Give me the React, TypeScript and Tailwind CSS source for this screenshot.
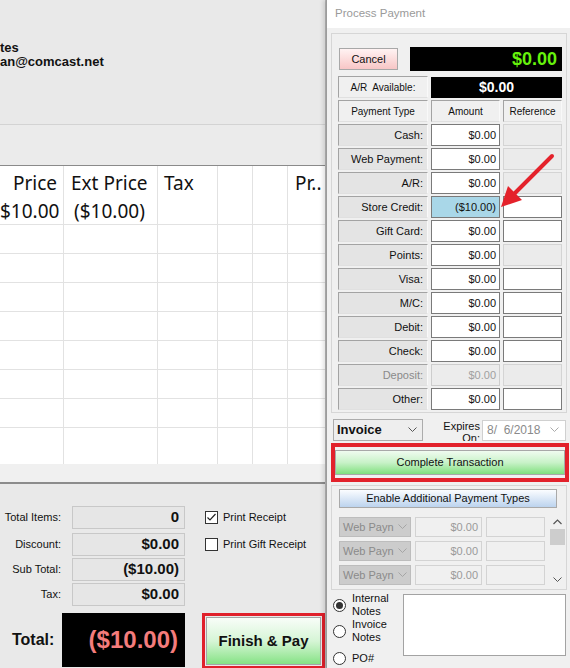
import React from 'react';

const SANS = "font-['Liberation_Sans',Arial,sans-serif]";

const Chevron = ({ color = '#555' }: { color?: string }) => (
  <svg width="9" height="6" viewBox="0 0 9 6" className="shrink-0">
    <path d="M0.5 0.5 L4.5 4.5 L8.5 0.5" fill="none" stroke={color} strokeWidth="1" />
  </svg>
);

const emptyRows = [29, 29, 29, 29, 29, 29, 29, 36];

const ItemsTable = () => (
  <div className="bg-white border-t border-[#8a8a8a] font-['Noto_Sans',sans-serif] text-[19px] text-[#111]">
    <div className="flex h-[59px] border-b border-[#e2e2e2]">
      <div className="w-[64px] border-r border-[#e2e2e2] text-right pr-[6px] pt-[3px] leading-[28px]">
        <div>Price</div>
        <div>$10.00</div>
      </div>
      <div className="w-[94px] border-r border-[#e2e2e2] pl-[7px] pt-[3px] leading-[28px]">
        <div>Ext Price</div>
        <div className="pl-[3px]">($10.00)</div>
      </div>
      <div className="w-[60px] border-r border-[#e2e2e2] pl-[6px] pt-[3px] leading-[28px]">Tax</div>
      <div className="w-[35px] border-r border-[#e2e2e2]" />
      <div className="w-[35px] border-r border-[#e2e2e2]" />
      <div className="w-[37px] pl-[7px] pt-[3px] leading-[28px] whitespace-nowrap">Pr..</div>
    </div>
    {emptyRows.map((h, i) => (
      <div
        key={i}
        style={{ height: h }}
        className={i < emptyRows.length - 1 ? 'flex border-b border-[#e2e2e2]' : 'flex'}
      >
        <div className="w-[64px] border-r border-[#e2e2e2]" />
        <div className="w-[94px] border-r border-[#e2e2e2]" />
        <div className="w-[60px] border-r border-[#e2e2e2]" />
        <div className="w-[35px] border-r border-[#e2e2e2]" />
        <div className="w-[35px] border-r border-[#e2e2e2]" />
        <div className="w-[37px]" />
      </div>
    ))}
  </div>
);

const CheckBox = ({ checked, label }: { checked: boolean; label: string }) => (
  <div className="flex items-center gap-[5px] ml-[20px]">
    <div className="w-[13px] h-[13px] border border-[#333] bg-white flex items-center justify-center">
      {checked && (
        <svg width="11" height="11" viewBox="0 0 11 11">
          <path d="M1.5 5.5 L4 8 L9.5 2" fill="none" stroke="#222" strokeWidth="1.2" />
        </svg>
      )}
    </div>
    <span className="text-[11px] text-[#111] whitespace-nowrap">{label}</span>
  </div>
);

const totals = [
  { label: 'Total Items:', value: '0', mt: 'mt-0', check: { checked: true, label: 'Print Receipt' } },
  { label: 'Discount:', value: '$0.00', mt: 'mt-[4px]', check: { checked: false, label: 'Print Gift Receipt' } },
  { label: 'Sub Total:', value: '($10.00)', mt: 'mt-[2px]' },
  { label: 'Tax:', value: '$0.00', mt: 'mt-[2px]' },
];

const LeftPanel = () => (
  <div className={`w-[326px] shrink-0 h-full flex flex-col bg-[#e9e9e9] border-r border-[#b9b9b9] ${SANS}`}>
    <div className="h-[125px] shrink-0 border-b border-[#d3d3d3] pt-[41px] font-bold text-[13px] leading-[14px] text-[#111]">
      <div>tes</div>
      <div>an@comcast.net</div>
    </div>
    <div className="h-[40px] shrink-0 bg-[#ebebeb]" />
    <ItemsTable />
    <div className="h-[18px] shrink-0 bg-[#f0f0f0]" />
    <div className="h-[2px] shrink-0 bg-[#8c8c8c]" />
    <div className="flex-1 flex flex-col pt-[22px]">
      {totals.map((t) => (
        <div key={t.label} className={`flex items-center h-[23px] ${t.mt}`}>
          <div className="w-[61px] text-right text-[11px] text-[#111] whitespace-nowrap">{t.label}</div>
          <div className="ml-[11px] w-[113px] h-[23px] bg-[#e6e6e6] border border-[#c8c8c8] flex items-center justify-end pr-[5px] font-bold text-[15px] text-[#111]">
            {t.value}
          </div>
          {t.check && <CheckBox checked={t.check.checked} label={t.check.label} />}
        </div>
      ))}
      <div className="flex items-start mt-[7px]">
        <div className="w-[62px] h-[54px] flex items-center pl-[12px] font-bold text-[16px] text-[#111]">Total:</div>
        <div className="w-[123px] h-[54px] bg-black flex items-center justify-end pr-[7px] font-bold text-[24px] text-[#f47c7c]">
          ($10.00)
        </div>
        <div className="ml-[17px] w-[123px] h-[56px] border-[3px] border-[#e0202b] p-px">
          <div className="h-full border border-[#a5a5a5] bg-linear-to-b from-[#f8fdf8] via-[#d6f5d6] to-[#84e284] flex items-center justify-center font-bold text-[15px] text-[#111]">
            Finish &amp; Pay
          </div>
        </div>
      </div>
    </div>
  </div>
);

type RefState = 'on' | 'off';
const payRows: { label: string; amount: string; ref: RefState; hl?: boolean; disabled?: boolean }[] = [
  { label: 'Cash:', amount: '$0.00', ref: 'off' },
  { label: 'Web Payment:', amount: '$0.00', ref: 'off' },
  { label: 'A/R:', amount: '$0.00', ref: 'off' },
  { label: 'Store Credit:', amount: '($10.00)', ref: 'on', hl: true },
  { label: 'Gift Card:', amount: '$0.00', ref: 'on' },
  { label: 'Points:', amount: '$0.00', ref: 'off' },
  { label: 'Visa:', amount: '$0.00', ref: 'on' },
  { label: 'M/C:', amount: '$0.00', ref: 'on' },
  { label: 'Debit:', amount: '$0.00', ref: 'on' },
  { label: 'Check:', amount: '$0.00', ref: 'on' },
  { label: 'Deposit:', amount: '$0.00', ref: 'off', disabled: true },
  { label: 'Other:', amount: '$0.00', ref: 'on' },
];

const labelBox =
  'h-[22px] border border-t-[#a3a3a3] border-l-[#a3a3a3] border-r-[#f9f9f9] border-b-[#e0e0e0] flex items-center';

const Radio = ({ checked }: { checked?: boolean }) => (
  <div className="w-[13px] h-[13px] shrink-0 rounded-full border border-[#333] bg-white flex items-center justify-center">
    {checked && <div className="w-[7px] h-[7px] rounded-full bg-[#333]" />}
  </div>
);

const PaymentDialog = () => (
  <div className={`relative flex-1 h-full flex flex-col bg-[#f0f0f0] border-l border-[#9c9c9c] shadow-[-3px_0_4px_rgba(0,0,0,0.12)] ${SANS} text-[11px] text-[#111]`}>
    <div className="h-[28px] shrink-0 bg-white flex items-center pl-[8px] text-[11.5px] text-[#9a9a9a]">Process Payment</div>

    <div className="ml-[4px] mr-[3px] mt-[5px] border border-[#d6d6d6] pl-[6px] pt-[13px] pb-[2px] flex flex-col">
      <div className="flex items-center h-[24px] w-[224px]">
        <div className="ml-px w-[59px] h-[22px] border border-[#a8a8a8] bg-linear-to-b from-[#fff3f3] to-[#f7c6c6] flex items-center justify-center">
          Cancel
        </div>
        <div className="ml-auto w-[152px] h-[24px] bg-black flex items-center justify-end pr-[5px] font-bold text-[18px] text-[#66f20c]">
          $0.00
        </div>
      </div>
      <div className="flex items-center mt-[5px] gap-[3px]">
        <div className={`${labelBox} w-[90px] bg-[#f0f0f0] justify-center text-[10px] whitespace-pre`}>A/R  Available:</div>
        <div className="w-[131px] h-[21px] bg-black flex items-center justify-center font-bold text-[14px] text-white">$0.00</div>
      </div>
      <div className="flex mt-[2px] gap-[3px] text-[10px]">
        <div className={`${labelBox} w-[90px] bg-[#f0f0f0] justify-center`}>Payment Type</div>
        <div className={`${labelBox} w-[69px] bg-[#f0f0f0] justify-center`}>Amount</div>
        <div className={`${labelBox} w-[59px] bg-[#f0f0f0] justify-center`}>Reference</div>
      </div>
      {payRows.map((r) => (
        <div key={r.label} className="flex mt-[2px] gap-[3px]">
          <div className={`${labelBox} w-[90px] bg-[#e4e4e4] justify-end pr-[4px] ${r.disabled ? 'text-[#8a8a8a]' : ''}`}>
            {r.label}
          </div>
          <div
            className={`w-[69px] h-[22px] border flex items-center justify-end pr-[3px] ${
              r.disabled
                ? 'bg-[#ececec] border-[#cdcdcd] text-[#a0a0a0]'
                : r.hl
                ? 'bg-[#a9d7e8] border-[#7a7a7a]'
                : 'bg-white border-[#7a7a7a]'
            }`}
          >
            {r.amount}
          </div>
          <div
            className={`w-[59px] h-[22px] border ${
              r.ref === 'on' ? 'bg-white border-[#7a7a7a]' : 'bg-[#ebebeb] border-[#d4d4d4]'
            }`}
          />
        </div>
      ))}
    </div>

    <div className="flex items-center mt-[6px] ml-[6px] h-[22px]">
      <div className="w-[90px] h-[22px] border border-[#acacac] bg-[#eeeeee] flex items-center justify-between pl-[3px] pr-[5px]">
        <span className="font-bold text-[13px]">Invoice</span>
        <Chevron />
      </div>
      <div className="w-[57px] h-[22px] overflow-hidden text-right leading-[12px] pt-px">
        <div>Expires</div>
        <div>On:</div>
      </div>
      <div className="ml-[2px] w-[84px] h-[21px] bg-white border border-[#d0d0d0] flex items-center justify-between pl-[4px] pr-[6px] text-[#8a8a8a] text-[12px]">
        <span className="whitespace-pre">8/  6/2018</span>
        <Chevron color="#aaa" />
      </div>
    </div>

    <div className="ml-[4px] mr-px mt-[2px] h-[39px] border-[4px] border-[#e2212b] py-[3px]">
      <div className="h-full border border-[#a8a8a8] bg-linear-to-b from-[#f0fbf0] via-[#c8f2c8] to-[#7ddf7d] flex items-center justify-center">
        Complete Transaction
      </div>
    </div>

    <div className="ml-[4px] mr-[3px] mt-[3px] border border-[#d6d6d6] pl-[7px] pt-[3px] pb-[2px]">
      <div className="w-[218px] h-[19px] border border-[#a9a9a9] bg-linear-to-b from-[#fbfdff] to-[#bcd3ee] flex items-center justify-center">
        Enable Additional Payment Types
      </div>
      <div className="flex mt-[6px]">
        <div className="flex flex-col gap-[4px] pt-[3px]">
          {[0, 1, 2].map((i) => (
            <div key={i} className="flex gap-[4px] h-[20px]">
              <div className="w-[72px] h-[20px] bg-[#cccccc] border border-[#bdbdbd] flex items-center justify-between pl-[3px] pr-[3px] text-[#8a8a8a] text-[11px] whitespace-nowrap overflow-hidden">
                <span>Web Payn</span>
                <Chevron color="#a5a5a5" />
              </div>
              <div className="w-[67px] h-[20px] bg-[#f0f0f0] border border-[#d3d3d3] flex items-center justify-end pr-[3px] text-[#9a9a9a]">
                $0.00
              </div>
              <div className="w-[59px] h-[20px] bg-[#f0f0f0] border border-[#d3d3d3]" />
            </div>
          ))}
        </div>
        <div className="ml-[4px] w-[16px] h-[73px] bg-[#f0f0f0] flex flex-col items-center">
          <div className="h-[15px] flex items-center">
            <svg width="9" height="6" viewBox="0 0 9 6">
              <path d="M0.5 5 L4.5 1 L8.5 5" fill="none" stroke="#555" strokeWidth="1.2" />
            </svg>
          </div>
          <div className="w-[15px] h-[16px] bg-[#cdcdcd]" />
          <div className="flex-1" />
          <div className="h-[15px] flex items-center">
            <Chevron />
          </div>
        </div>
      </div>
    </div>

    <div className="flex mt-[2px] ml-[6px]">
      <div className="flex flex-col w-[70px]">
        <div className="flex items-center gap-[6px] h-[26px] leading-[13px]">
          <Radio checked />
          <div>
            <div>Internal</div>
            <div>Notes</div>
          </div>
        </div>
        <div className="flex items-center gap-[6px] h-[26px] leading-[13px]">
          <Radio />
          <div>
            <div>Invoice</div>
            <div>Notes</div>
          </div>
        </div>
        <div className="flex items-center gap-[6px] h-[14px] mt-[7px]">
          <Radio />
          <div>PO#</div>
        </div>
      </div>
      <div className="mt-[2px] w-[163px] h-[62px] bg-white border border-[#a3a3a3]" />
    </div>

    <svg className="absolute left-0 top-0 pointer-events-none" width="244" height="668" viewBox="326 0 244 668">
      <line x1="551" y1="156" x2="513" y2="194" stroke="#e4222b" strokeWidth="4" strokeLinecap="round" />
      <polygon points="500,207 507,186 521,200" fill="#e4222b" />
    </svg>
  </div>
);

export default function App() {
  return (
    <div className="w-[570px] h-[668px] flex overflow-hidden bg-[#e9e9e9]">
      <LeftPanel />
      <PaymentDialog />
    </div>
  );
}
